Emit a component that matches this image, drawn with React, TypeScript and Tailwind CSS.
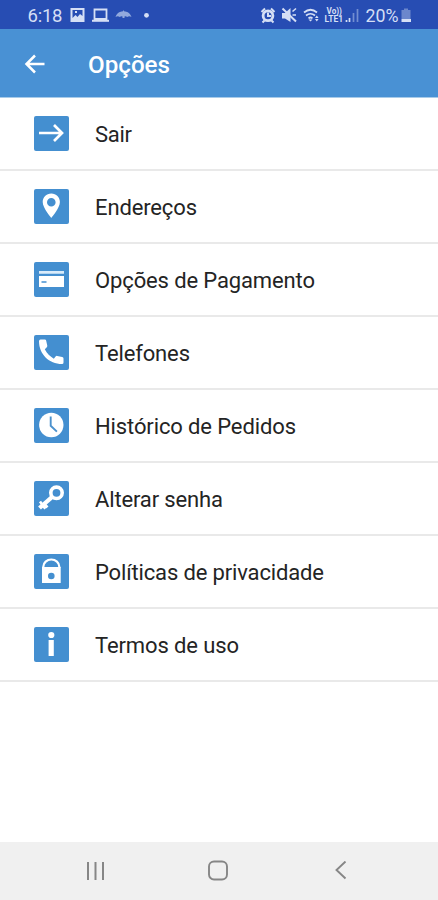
import type { ReactNode } from 'react';

const items: { label: string; width: number; icon: ReactNode }[] = [
  {
    label: 'Sair',
    width: 37,
    icon: <path d="M5 17H28M20 9l8 8-8 8" fill="none" stroke="white" strokeWidth="2.700" />,
  },
  {
    label: 'Endereços',
    width: 102,
    icon: (
      <path
        fillRule="evenodd"
        fill="white"
        d="M17.300 4.500c-5 0-8.600 3.700-8.600 8.500 0 6.200 8.600 16 8.600 16s8.600-9.800 8.600-16c0-4.800-3.600-8.500-8.600-8.500zm0 4.500a4.300 4.300 0 1 1 0 8.600 4.300 4.300 0 0 1 0-8.600z"
      />
    ),
  },
  {
    label: 'Opções de Pagamento',
    width: 220,
    icon: (
      <>
        <path d="M5 9h25v2.800H5z" fill="#d9ebfa" />
        <path d="M5 14h25v11H5z" fill="white" />
        <path d="M7.500 20h5" stroke="#448fd0" strokeWidth="1.500" />
      </>
    ),
  },
  {
    label: 'Telefones',
    width: 95,
    icon: (
      <path
        fill="white"
        d="M5 6.200Q5 4.500 6.500 4.500L10.700 4.500Q12 4.500 12.200 5.800L13.300 10.800Q13.400 11.600 12.800 12.200L10.800 14.300C13 18.400 16 21.500 19.800 23.800L21.800 21.300Q22.400 20.700 23.300 20.900L28.200 21.900Q29.500 22.200 29.500 23.400V27.500Q29.500 29 28 29C15 29 5 19 5 6.200z"
      />
    ),
  },
  {
    label: 'Histórico de Pedidos',
    width: 201,
    icon: (
      <>
        <circle cx="17.300" cy="17" r="12.200" fill="white" />
        <path d="M16.700 8.500v9.300l6.200 5.800" fill="none" stroke="#4b91cd" strokeWidth="1.900" />
      </>
    ),
  },
  {
    label: 'Alterar senha',
    width: 128,
    icon: (
      <g fill="none" stroke="white">
        <circle cx="22.500" cy="11.800" r="5.700" strokeWidth="3.600" />
        <path d="M18.500 15.700L5.500 27" strokeWidth="4.200" />
        <path d="M10 22.500l3.500 3.800M6 20.500l5.300 7.300" strokeWidth="2.600" />
      </g>
    ),
  },
  {
    label: 'Políticas de privacidade',
    width: 229,
    icon: (
      <>
        <path d="M9.300 14v-1.200a8 7.300 0 0 1 16 0V14" fill="none" stroke="white" strokeWidth="2.200" />
        <path d="M8 13h18.700v16H8z" fill="white" />
        <circle cx="17.300" cy="22" r="3.300" fill="#448fd0" />
      </>
    ),
  },
  {
    label: 'Termos de uso',
    width: 144,
    icon: (
      <>
        <circle cx="17.300" cy="8" r="3.100" fill="white" />
        <path d="M14.600 13h5.200v16h-5.200z" fill="white" />
      </>
    ),
  },
];

function StatusBar() {
  return (
    <div className="flex h-[29px] shrink-0 items-center bg-[#274db3] pl-7 text-[#d5dff5]">
      <svg className="h-[29px] w-[128px]" viewBox="28 0 128 29">
        <text x="27.500" y="22" fontSize="18.500" textLength="35" fill="currentColor">6:18</text>
        <path fillRule="evenodd" d="M70.500 8h14v14h-14zM72.500 10v8l3-3 2 2 2.500-3 2.500 2v-6z" fill="currentColor" />
        <path d="M75 11h2v2h-2z" fill="currentColor" />
        <path d="M94.500 19V9.500h12V19z" fill="none" stroke="currentColor" strokeWidth="1.800" />
        <path d="M92 20.800h17" stroke="currentColor" strokeWidth="2" />
        <path d="M115.500 17c1.500-4.500 5-5.500 7-5.500l1-1.200 1 1.200c2 0 5.500 1 7 5.500q-2.300-1.700-4.300 0-1.300-1-2.700-.5v1.500h-2v-1.500q-1.500-.5-2.700.5-2-1.700-4.300 0z" fill="#92a9dd" />
        <circle cx="146.500" cy="15.300" r="2.400" fill="currentColor" />
      </svg>
      <svg className="ml-auto h-[29px] w-[180px]" viewBox="258 0 180 29">
        <path fillRule="evenodd" d="M268 9.500a6.300 6.300 0 1 1 0 12.600 6.300 6.300 0 0 1 0-12.600zm0 2.800a3.500 3.500 0 1 0 0 7 3.500 3.500 0 0 0 0-7z" fill="currentColor" />
        <path d="M268 12.500V16h3M261.500 12l3.500-3.500M271 8.500l3.500 3.500M264.500 20.500l-2 2M271.500 20.500l2 2" fill="none" stroke="currentColor" strokeWidth="2" />
        <path d="M282 13h3l5.500-5v14L285 18.500h-3z" fill="currentColor" />
        <path d="M282.500 8.500l13.500 13" stroke="currentColor" strokeWidth="2" />
        <path d="M292.500 11.500l3.500-3M292.500 15h3.500" stroke="currentColor" strokeWidth="1.600" />
        <path d="M304 12.500q6.500-5.500 13 0M306 15.500q4.500-3.500 9 0M308.500 18.300q2-1.600 4 0" fill="none" stroke="currentColor" strokeWidth="1.700" />
        <path d="M310.500 21.500l-2-2h4zM315 18l1.800-2.500 1.800 2.500zM315 19l1.800 2.500 1.800-2.500z" fill="currentColor" />
        <text x="326.500" y="14" fontSize="8.500" fontWeight="700" textLength="15.500" lengthAdjust="spacingAndGlyphs" fill="currentColor">Vo))</text>
        <text x="324.500" y="22.300" fontSize="9" fontWeight="700" textLength="18.500" lengthAdjust="spacingAndGlyphs" fill="currentColor">LTE1</text>
        <path d="M346.500 20v2M349.500 18v4" stroke="currentColor" strokeWidth="1.700" />
        <path d="M353.500 13v9M357.500 9v13" stroke="#728ed1" strokeWidth="1.700" />
        <text x="365.500" y="22" fontSize="18" textLength="33" lengthAdjust="spacingAndGlyphs" fill="currentColor">20%</text>
        <path d="M401.500 10h2.500V8.500h4V10h2.500v9h-9z" fill="#6c87cc" />
        <path d="M401.500 19h9.500v3h-9.500z" fill="currentColor" />
      </svg>
    </div>
  );
}

export default function App() {
  return (
    <div className="flex h-[900px] w-[438px] flex-col overflow-hidden bg-white font-['Roboto',sans-serif] text-[#242424]">
      <StatusBar />
      <header className="flex h-[69px] shrink-0 items-center border-b border-[#a8cbe9] bg-[#4991d4] text-white">
        <svg className="ml-6 mt-px h-6 w-6" viewBox="0 0 24 24" fill="none" stroke="currentColor" strokeWidth="2.500">
          <path d="M20.500 12H2.500M11 3.500L2.500 12l8.500 8.500" />
        </svg>
        <h1 className="ml-10 mt-1 text-2xl font-medium">
          <svg className="block h-8 w-24 overflow-visible" viewBox="0 0 96 32">
            <text x="0" y="24" textLength="82" lengthAdjust="spacingAndGlyphs" fill="currentColor">Opções</text>
          </svg>
        </h1>
      </header>
      <ul className="flex-1">
        {items.map(({ label, width, icon }) => (
          <li key={label} className="flex h-[73px] items-center border-b-2 border-[#e9e9e9] pl-[34px]">
            <svg className="h-[35px] w-[35px] rounded-[2px] bg-[#448fd0]" viewBox="0 0 35 35">
              {icon}
            </svg>
            <svg className="ml-[26px] mt-0.5 h-8 w-64 overflow-visible text-[22px]" viewBox="0 0 256 32">
              <text x="0" y="23" textLength={width} fill="currentColor">{label}</text>
            </svg>
          </li>
        ))}
      </ul>
      <nav className="flex h-[58px] shrink-0 items-center bg-[#f0f0f0] text-[#868686]">
        <svg className="-mt-px ml-[85px] h-5 w-5" viewBox="0 0 20 20" stroke="currentColor" strokeWidth="2">
          <path d="M3 1v18M10.500 1v18M18 1v18" />
        </svg>
        <svg className="ml-[102px] h-[22px] w-[22px]" viewBox="0 0 22 22" fill="none" stroke="currentColor" strokeWidth="1.900">
          <rect x="2" y="1.500" width="18" height="18" rx="5" />
        </svg>
        <svg className="ml-[104px] h-5 w-5" viewBox="0 0 20 20" fill="none" stroke="currentColor" strokeWidth="1.900">
          <path d="M12.500 0.500L3.500 9l9 8.500" />
        </svg>
      </nav>
    </div>
  );
}
